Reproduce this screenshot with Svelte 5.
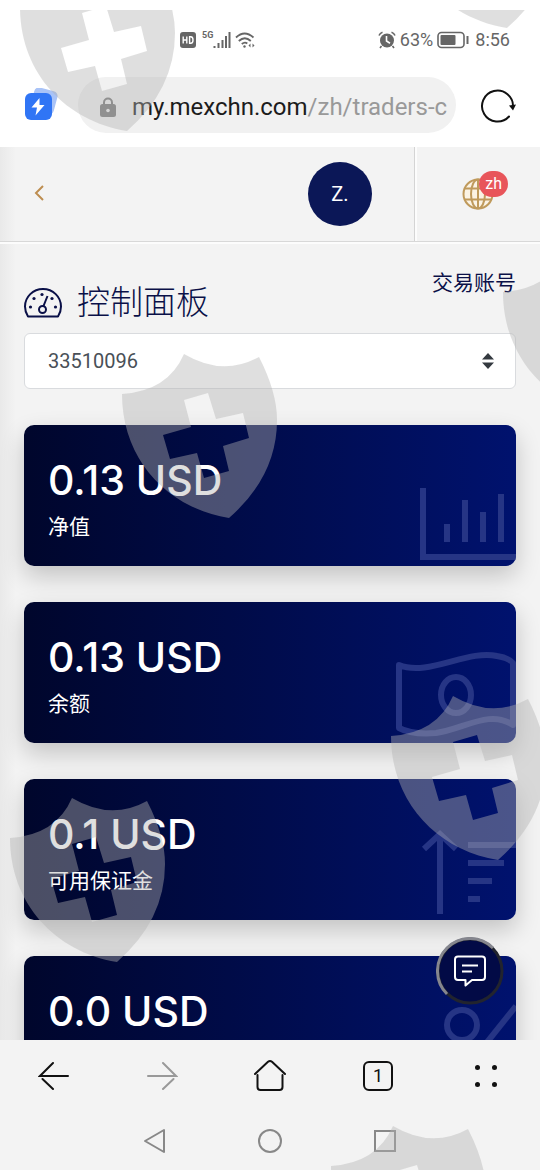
<script lang="ts">
  type CardIcon = 'chart' | 'note' | 'sort' | 'percent';

  interface Card {
    value: string;
    label?: string;
    icon: CardIcon;
  }

  const cards: Card[] = [
    { value: '0.13 USD', label: '净值', icon: 'chart' },
    { value: '0.13 USD', label: '余额', icon: 'note' },
    { value: '0.1 USD', label: '可用保证金', icon: 'sort' },
    { value: '0.0 USD', icon: 'percent' }
  ];

  const accounts = ['33510096'];
  let account = $state(accounts[0]);

  const host = 'my.mexchn.com';
  const path = '/zh/traders-c';

  // top-left corner of every shield on the overlay
  const shields = [
    [20, -43],
    [400, -146],
    [503, 242],
    [122, 344],
    [391, 686],
    [10, 788],
    [331, 1116]
  ];
</script>

<div class="screen">
  <div class="status">
    <div class="status-group signals">
      <svg width="16" height="16" viewBox="0 0 16 16" aria-hidden="true">
        <rect width="16" height="16" rx="3" fill="#666" />
        <path d="M3.2 4.5v7M3.2 8h3.6M6.8 4.5v7M9.6 4.8v6.4h1.2q2.2 0 2.2-3.2t-2.2-3.2z" fill="none" stroke="#fff" stroke-width="1.4" />
      </svg>
      <span class="net">5G</span>
      <svg class="bars" width="18" height="18" viewBox="0 0 18 18" aria-hidden="true">
        <path d="M1.5 15v2M5.5 12v5M9.5 9v8M13 5v12M16.5 1v16" stroke="#666" stroke-width="2" />
      </svg>
      <svg width="20" height="18" viewBox="0 0 20 18" fill="none" stroke="#666" stroke-width="1.8" aria-hidden="true">
        <path d="M1 6.5Q9.5-1.5 18.5 6.5M3.8 10q6-5.6 12 0M6.8 13q3-2.6 5.5-.5" />
        <circle cx="9.5" cy="15.5" r="1.2" fill="#666" stroke="none" />
        <path d="M15.5 12.5l-2 2 2 2zM17.5 12.5l2 2-2 2z" fill="#666" stroke="none" />
      </svg>
    </div>
    <div class="status-group">
      <svg width="18" height="18" viewBox="0 0 18 18" aria-hidden="true">
        <circle cx="9" cy="9.5" r="7" fill="#666" />
        <path d="M1 4.5Q2 2 4.5 1.2M17 4.5Q16 2 13.5 1.2M3.5 15l-1.5 2M14.5 15l1.500 2" fill="none" stroke="#666" stroke-width="1.6" />
        <path d="M8.5 5v5l3.5 2.2" fill="none" stroke="#fff" stroke-width="1.6" />
      </svg>
      <span>63%</span>
      <svg width="32" height="18" viewBox="0 0 32 18" aria-hidden="true">
        <rect x="1" y="1.5" width="26" height="15" rx="3.5" fill="none" stroke="#666" stroke-width="1.6" />
        <rect x="3.5" y="4" width="15" height="10" rx="1" fill="#666" />
        <path d="M30.5 5v8" stroke="#666" stroke-width="2" />
      </svg>
      <span class="clock">8:56</span>
    </div>
  </div>

  <div class="browser-bar">
    <button class="icon-btn" aria-label="加速">
      <svg width="34" height="34" viewBox="0 0 34 34">
        <rect x="8" y="1" width="24" height="24" rx="5" fill="#a9c3f7" transform="rotate(15 20 13)" />
        <rect x="1" y="5" width="27" height="27" rx="6" fill="#3075f5" />
        <path d="M15.5 10L7.5 19.500h5.500l-1.500 8L20.500 17h-5z" fill="#fff" />
      </svg>
    </button>
    <div class="address">
      <svg width="16" height="20" viewBox="0 0 16 20" aria-hidden="true">
        <path d="M4 8V5.5a4 4 0 0 1 8 0V8" fill="none" stroke="#777" stroke-width="2" />
        <rect y="7" width="16" height="13" rx="2.5" fill="#777" />
        <circle cx="8" cy="13.5" r="1.8" fill="#eee" />
      </svg>
      <a class="url" href="https://{host}{path}">{host}<span class="path">{path}</span></a>
    </div>
    <button class="icon-btn" aria-label="刷新">
      <svg width="36" height="36" viewBox="0 0 36 36" fill="none" stroke="#111" stroke-width="2">
        <path d="M29 29.5A15.5 15.5 0 1 1 33 20" stroke-linecap="round" />
        <path d="M29 18.5l7-1-3 6z" fill="#111" stroke="none" />
      </svg>
    </button>
  </div>

  <div class="viewport">
    <div class="scroller">
      <header class="top">
        <button class="icon-btn back" aria-label="返回">
          <svg width="12" height="18" viewBox="0 0 12 18" fill="none" stroke="#bd8d50" stroke-width="2">
            <path d="M10 1L3 8l7 7" />
          </svg>
        </button>
        <button class="avatar">Z.</button>
        <button class="lang" aria-label="语言 zh">
          <svg width="32" height="32" viewBox="0 0 32 32" fill="none" stroke="#bf9a5c" stroke-width="2">
            <circle cx="16" cy="16" r="14.5" fill="#fbf3e4" />
            <ellipse cx="16" cy="16" rx="7" ry="14.5" />
            <path d="M16 1.5v29M3 10.5h26M3 21.5h26" />
          </svg>
          <span class="badge">zh</span>
        </button>
      </header>

      <main>
        <div class="heading">
          <h1>
            <svg width="38" height="30" viewBox="0 0 38 30" fill="none" stroke="#0a1048" stroke-width="2" aria-hidden="true">
              <path d="M4 28.5Q1 24 1 18.5A18 17.5 0 0 1 37 18.5Q37 24 34 28.5z" stroke-linejoin="round" />
              <circle cx="18.5" cy="21.5" r="3.5" />
              <path d="M19.5 18L23.5 8" />
              <g fill="#0a1048" stroke="none">
                <circle cx="6.5" cy="19" r="1.6" />
                <circle cx="10" cy="10.5" r="1.6" />
                <circle cx="18" cy="6.5" r="1.6" />
                <circle cx="28" cy="10.5" r="1.6" />
                <circle cx="31.5" cy="19" r="1.6" />
              </g>
            </svg>
            控制面板
          </h1>
          <label for="account">交易账号</label>
        </div>

        <div class="select">
          <select id="account" bind:value={account}>
            {#each accounts as id}
              <option value={id}>{id}</option>
            {/each}
          </select>
          <svg width="12" height="16" viewBox="0 0 12 16" fill="#343a40" aria-hidden="true">
            <path d="M6 0l6 6.500H0zM6 16l6-6.500H0z" />
          </svg>
        </div>

        {#each cards as card}
          <section class="card">
            <p class="value">{card.value}</p>
            {#if card.label}
              <p class="label">{card.label}</p>
            {/if}
            <svg class="card-icon" width="120" height="108" viewBox="0 0 120 108" aria-hidden="true">
              {#if card.icon === 'chart'}
                <path d="M27 30v69h93M51 66v18M69 42v42M87 54v30M105 36v48" />
              {:else if card.icon === 'note'}
                <path d="M3 30C32 42 72 14 101 21Q113 23 117 28V90C94 74 68 94 40 98Q16 100 3 93z" stroke-linejoin="round" />
                <ellipse cx="60" cy="60" rx="15" ry="18" />
              {:else if card.icon === 'sort'}
                <path d="M44 102V21M28 37l16-15 16 15M72 33h48M72 51h36M72 69h24M72 87h12" />
              {:else}
                <circle cx="66" cy="36" r="15" />
                <circle cx="102" cy="84" r="15" />
                <path d="M120 17L60 92" />
              {/if}
            </svg>
          </section>
        {/each}
      </main>
    </div>

    <button class="chat" aria-label="聊天">
      <svg width="68" height="68" viewBox="0 0 68 68" fill="none">
        <circle cx="34" cy="34" r="32" fill="#020a46" stroke="#22242e" stroke-width="3" />
        <path d="M11 57A32 32 0 0 1 57 11" stroke="#85868e" stroke-width="3" />
        <g stroke="#fff" stroke-width="2" stroke-linejoin="round">
          <path d="M22 19.5h24q3 0 3 3V40q0 3-3 3H36l-6.5 5.5V43H22q-3 0-3-3V22.5q0-3 3-3z" />
          <path d="M26 28.5h16M26 34.5h10" />
        </g>
      </svg>
    </button>
  </div>

  <nav class="toolbar">
    <button class="icon-btn" aria-label="后退">
      <svg width="32" height="32" viewBox="0 0 32 32" fill="none" stroke="#111" stroke-width="2" stroke-linecap="round">
        <path d="M30 16H2L15 3M4.5 19L15 29" />
      </svg>
    </button>
    <button class="icon-btn" aria-label="前进">
      <svg width="32" height="32" viewBox="0 0 32 32" fill="none" stroke="#999" stroke-width="2" stroke-linecap="round">
        <path d="M2 16h28L17 3M27.5 19L17 29" />
      </svg>
    </button>
    <button class="icon-btn" aria-label="主页">
      <svg width="34" height="34" viewBox="0 0 34 34" fill="none" stroke="#111" stroke-width="2" stroke-linecap="round">
        <path d="M2 15L15 2.8q2-1.6 4 0L32 15M4.5 16v12q0 3 3 3h19q3 0 3-3V16" />
      </svg>
    </button>
    <button class="icon-btn" aria-label="标签页">
      <span class="tabs">1</span>
    </button>
    <button class="icon-btn" aria-label="菜单">
      <svg width="24" height="24" viewBox="0 0 24 24" fill="#111">
        <circle cx="3.5" cy="3.5" r="2.5" />
        <circle cx="20.5" cy="3.5" r="2.5" />
        <circle cx="3.5" cy="20.5" r="2.5" />
        <circle cx="20.5" cy="20.5" r="2.5" />
      </svg>
    </button>
  </nav>

  <nav class="system">
    <button class="icon-btn" aria-label="系统返回">
      <svg width="24" height="26" viewBox="0 0 24 26" fill="none" stroke="#888" stroke-width="2" stroke-linejoin="round">
        <path d="M21 2v22L2 13z" />
      </svg>
    </button>
    <button class="icon-btn" aria-label="桌面">
      <svg width="26" height="26" viewBox="0 0 26 26" fill="none" stroke="#888" stroke-width="2">
        <circle cx="13" cy="13" r="11" />
      </svg>
    </button>
    <button class="icon-btn" aria-label="最近任务">
      <svg width="24" height="24" viewBox="0 0 24 24" fill="none" stroke="#888" stroke-width="2">
        <rect x="2" y="2" width="20" height="20" />
      </svg>
    </button>
  </nav>

  <svg class="watermark" aria-hidden="true">
    {#each shields as [x, y]}
      <path
        transform="translate({x} {y})"
        fill-rule="evenodd"
        d="M0 40Q46 37 62 0Q101 23 137 3Q155 38 155 66Q155 122 107 164C45 154 0 105 0 40zM62 46L86 39L94 65L121 59L127 84L101 92L107 117L82 124L75 99L48 105L41 81L69 73z"
      />
    {/each}
  </svg>
</div>

<style>
  :global(body) {
    margin: 0;
    background: #fff;
  }
  .screen {
    position: relative;
    display: flex;
    flex-direction: column;
    height: 100vh;
    overflow: hidden;
    font-family: Roboto, 'Noto Sans CJK SC', sans-serif;
    color: #0a1048;
  }
  button {
    border: 0;
    padding: 0;
    background: none;
    font-family: inherit;
    cursor: pointer;
  }
  svg {
    display: block;
    flex-shrink: 0;
  }
  .icon-btn {
    display: flex;
    align-items: center;
    justify-content: center;
    flex-shrink: 0;
  }
  .status {
    display: flex;
    justify-content: space-between;
    padding: 28px 30px 24px 180px;
    font-size: 18px;
    line-height: 24px;
    color: #666;
  }
  .status-group {
    display: flex;
    align-items: center;
    gap: 4px;
  }
  .net {
    align-self: flex-start;
    margin-left: 2px;
    font-size: 9px;
    line-height: 14px;
    font-weight: 700;
  }
  .bars {
    margin-left: -4px;
  }
  .clock {
    margin-left: 2px;
  }
  .browser-bar {
    display: flex;
    align-items: center;
    gap: 20px;
    padding: 1px 24px 14px;
  }
  .address {
    flex: 1;
    min-width: 0;
    display: flex;
    align-items: center;
    gap: 16px;
    height: 56px;
    box-sizing: border-box;
    margin-right: 4px;
    padding: 4px 8px 0 22px;
    border-radius: 28px;
    background: #f1f1f1;
  }
  .url {
    flex: 1;
    overflow: hidden;
    white-space: nowrap;
    font-size: 24px;
    line-height: 32px;
    color: #1c1c1c;
    text-decoration: none;
  }
  .path {
    color: #999;
  }
  .viewport {
    position: relative;
    flex: 1;
    min-height: 0;
  }
  .scroller {
    height: 100%;
    overflow-y: auto;
    scrollbar-width: none;
    background: linear-gradient(90deg, #e9e9e9, #f3f3f3 16px);
  }
  .top {
    display: flex;
    align-items: stretch;
    height: 94px;
    border-bottom: 1px solid #d8d8d8;
    box-shadow: 0 2px 0 #fcfcfc;
  }
  .back {
    width: 78px;
    margin-right: auto;
  }
  .avatar {
    align-self: center;
    width: 64px;
    height: 64px;
    margin-right: 42px;
    border-radius: 50%;
    background: #0b1757;
    color: #fff;
    font-size: 20px;
  }
  .lang {
    position: relative;
    display: flex;
    align-items: center;
    justify-content: center;
    width: 126px;
    border-left: 1px solid #d4d4d4;
    box-shadow: inset 2px 0 0 #fcfcfc;
  }
  .badge {
    position: absolute;
    top: 24px;
    right: 32px;
    padding: 0 6px;
    border-radius: 13px;
    background: #e8555a;
    color: #fff;
    font-size: 16px;
    line-height: 26px;
  }
  main {
    padding: 26px 24px 36px;
  }
  .heading {
    display: flex;
    justify-content: space-between;
    align-items: flex-start;
    margin-bottom: 8px;
  }
  h1 {
    display: flex;
    align-items: center;
    gap: 15px;
    margin: 13px 0 0;
    font-size: 33px;
    line-height: 44px;
    font-weight: 300;
  }
  label {
    font-size: 21px;
    line-height: 30px;
  }
  .select {
    display: grid;
    align-items: center;
    margin-bottom: 36px;
  }
  .select > * {
    grid-area: 1 / 1;
  }
  .select svg {
    justify-self: end;
    margin-right: 22px;
    pointer-events: none;
  }
  select {
    width: 100%;
    height: 56px;
    padding: 0 48px 0 23px;
    border: 1px solid #d9dbde;
    border-radius: 6px;
    background: #fff;
    appearance: none;
    font-family: inherit;
    font-size: 20px;
    color: #495057;
  }
  .card {
    position: relative;
    overflow: hidden;
    box-sizing: border-box;
    min-height: 141px;
    padding: 31px 24px 24px;
    margin-bottom: 36px;
    border-radius: 10px;
    background: linear-gradient(90deg, #00062c, #00126e);
    box-shadow: 0 10px 24px rgba(0, 0, 0, 0.2);
    color: #fff;
  }
  .value {
    margin: 0 0 8px;
    font-family: Inter, sans-serif;
    font-size: 41px;
    line-height: 48px;
    font-weight: 500;
  }
  .label {
    margin: 0;
    font-size: 21px;
    line-height: 30px;
  }
  .card-icon {
    position: absolute;
    right: 0;
    bottom: 0;
    fill: none;
    stroke: #263585;
    stroke-width: 6;
  }
  .chat {
    position: absolute;
    right: 36px;
    bottom: 35px;
  }
  .toolbar {
    display: grid;
    grid-template-columns: repeat(5, 1fr);
    height: 72px;
    background: #f3f3f3;
  }
  .tabs {
    width: 26px;
    border: 2px solid #111;
    border-radius: 6px;
    font-size: 18px;
    line-height: 26px;
    color: #111;
  }
  .system {
    display: flex;
    justify-content: center;
    gap: 90px;
    height: 58px;
    background: #f3f3f3;
  }
  .watermark {
    position: absolute;
    top: 10px;
    left: 0;
    width: 100%;
    height: calc(100% - 10px);
    fill: rgba(178, 178, 178, 0.42);
    pointer-events: none;
  }
</style>
